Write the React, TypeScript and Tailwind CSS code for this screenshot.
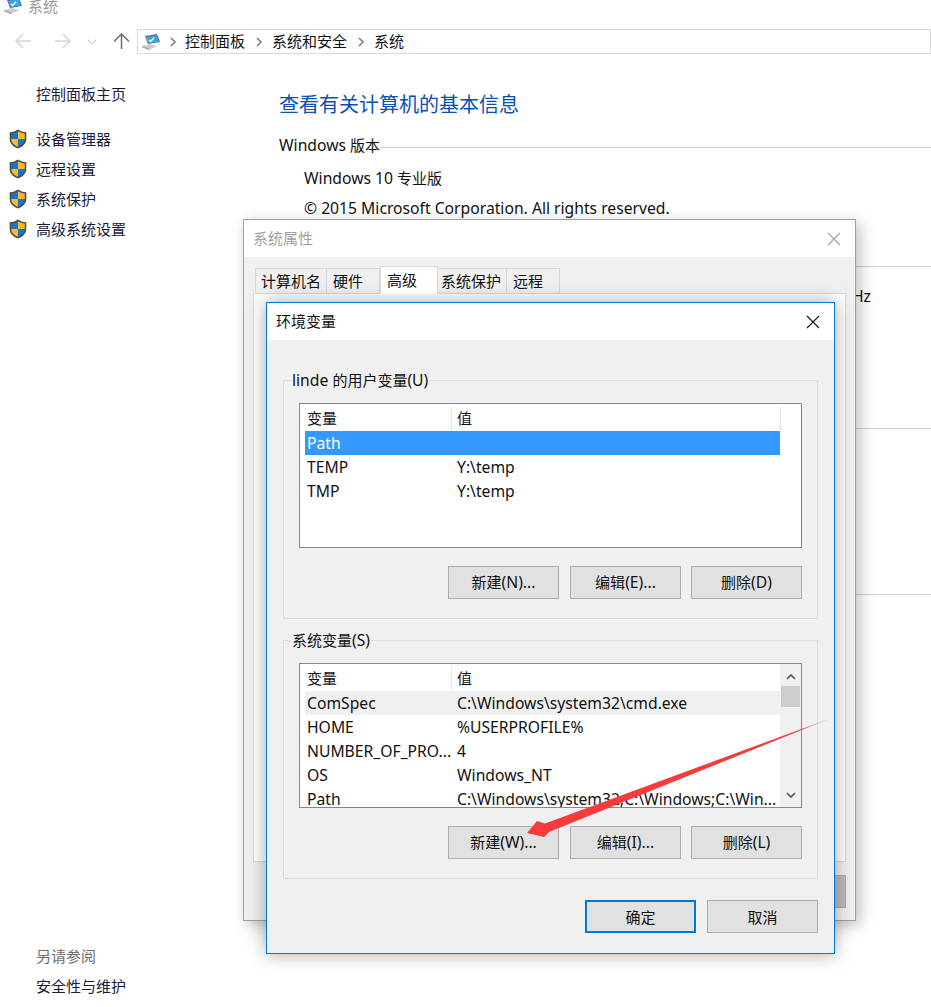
const font = "font-['Noto_Sans','Noto_Sans_CJK_SC',sans-serif]";

// latin runs are a bit wider than cjk in the original font
function Mixed({ text }: { text: string }) {
  const parts = text.match(/[\u4e00-\u9fff]+|[^\u4e00-\u9fff]+/g) ?? [];
  return (
    <>
      {parts.map((p, i) => (
        <span key={i} className={/[\u4e00-\u9fff]/.test(p) ? "text-[15px]" : "text-[15.7px]"}>
          {p}
        </span>
      ))}
    </>
  );
}

function PcIcon({ className }: { className?: string }) {
  return (
    <svg viewBox="0 0 20 16" className={className}>
      <polygon points="4,2 16,0 19,8 7,10" fill="#5a6d7c" />
      <polygon points="5,3 15.5,1.5 17.8,7.5 7.5,9" fill="#3ea6e8" />
      <path d="M8 6l1.5 1.5L13 4" stroke="#fff" strokeWidth="1.3" fill="none" />
      <polygon points="1,12 9,10 16,12 8,16" fill="#c9cdd1" />
      <polygon points="1,12 8,14.5 8,16 1,13.2" fill="#9aa1a7" />
    </svg>
  );
}

function Shield() {
  return (
    <svg viewBox="0 0 18 20" className="w-[18px] h-[20px] shrink-0">
      <path d="M9 0.5C6.5 2.2 4 3 0.7 3.2V10c0 4.5 3.5 7.7 8.3 9.5 4.8-1.8 8.3-5 8.3-9.5V3.2C14 3 11.5 2.2 9 0.5z" fill="#4d4a44" />
      <path d="M9 2.2C7 3.5 4.8 4.2 2.2 4.5V10h6.8z" fill="#1a74c9" />
      <path d="M9 2.2c2 1.3 4.2 2 6.8 2.3V10H9z" fill="#fbb92d" />
      <path d="M2.2 10c0 3.6 2.8 6.2 6.8 7.8V10z" fill="#fbb92d" />
      <path d="M15.8 10c0 3.6-2.8 6.2-6.8 7.8V10z" fill="#1a74c9" />
    </svg>
  );
}

function Crumb() {
  return (
    <svg viewBox="0 0 8 12" className="w-[8px] h-[12px] shrink-0">
      <path d="M2 2l4 4-4 4" stroke="#7a7a7a" strokeWidth="1.5" fill="none" />
    </svg>
  );
}

function NavArrow({ dir, color }: { dir: "left" | "right" | "up"; color: string }) {
  const d =
    dir === "left"
      ? "M1 8h15M8 1L1 8l7 7"
      : dir === "right"
      ? "M1 8h15M9 1l7 7-7 7"
      : "M8.5 16V1M1 8.5l7.5-7.5 7.5 7.5";
  return (
    <svg viewBox="0 0 17 17" className="w-[17px] h-[17px]">
      <path d={d} stroke={color} strokeWidth="1.5" fill="none" />
    </svg>
  );
}

function CloseX({ color }: { color: string }) {
  return (
    <svg viewBox="0 0 14 14" className="w-[14px] h-[14px]">
      <path d="M1 1l12 12M13 1L1 13" stroke={color} strokeWidth="1.1" fill="none" />
    </svg>
  );
}

function Btn({ label, primary }: { label: string; primary?: boolean }) {
  return (
    <div
      className={
        "w-[111px] h-[33px] flex items-center justify-center bg-[#e1e1e1] text-[#111] " +
        (primary ? "border-2 border-[#0078d7]" : "border border-[#adadad]")
      }
    >
      <span>
        <Mixed text={label} />
      </span>
    </div>
  );
}

function Row({ name, value, selected, hover }: { name: string; value: string; selected?: boolean; hover?: boolean }) {
  return (
    <div
      className={
        "flex items-center h-[24px] w-[475px] ml-[5px] pl-[2px] pt-[2px] shrink-0 text-[15.7px] whitespace-nowrap " +
        (selected ? "bg-[#3399ff] text-white" : hover ? "bg-[#f0f0f0] text-[#111]" : "text-[#111]")
      }
    >
      <span className="w-[150px] overflow-hidden">{name}</span>
      <span>{value}</span>
    </div>
  );
}

function VarList({ children, scroll }: { children: React.ReactNode; scroll?: boolean }) {
  return (
    <div className="relative h-[145px] bg-white border border-[#828790] overflow-hidden">
      <div className="flex items-stretch h-[27px] ml-[5px] w-[476px] pt-[2px] text-[15px] text-[#111]">
        <span className="w-[147px] pl-[2px] flex items-center border-r border-[#e5e5e5]">变量</span>
        <span className="flex-1 pl-[5px] flex items-center border-r border-[#e5e5e5]">值</span>
      </div>
      {children}
      {scroll && (
        <div className="absolute right-0 top-0 bottom-0 w-[21px] flex flex-col items-center bg-[#f0f0f0]">
          <svg viewBox="0 0 10 6" className="w-[10px] h-[6px] mt-[10px]">
            <path d="M1 5l4-4 4 4" stroke="#505050" strokeWidth="1.6" fill="none" />
          </svg>
          <div className="w-[19px] h-[21px] mt-[6px] bg-[#cdcdcd]" />
          <svg viewBox="0 0 10 6" className="w-[10px] h-[6px] mt-[85px]">
            <path d="M1 1l4 4 4-4" stroke="#505050" strokeWidth="1.6" fill="none" />
          </svg>
        </div>
      )}
    </div>
  );
}

function Group({ legend, buttons, children }: { legend: string; buttons: string[]; children: React.ReactNode }) {
  return (
    <div className="relative h-[239px] border border-[#dcdcdc] pt-[22px] px-[15px]">
      <span className="absolute left-[7px] top-[-10px] bg-[#f0f0f0] px-[1px] leading-[18px] text-[#111] whitespace-nowrap">
        <Mixed text={legend} />
      </span>
      {children}
      <div className="flex justify-end gap-[10px] mt-[18px]">
        {buttons.map((b) => (
          <div key={b} className="first:mr-px">
            <Btn label={b} />
          </div>
        ))}
      </div>
    </div>
  );
}

const tabs = [
  { name: "计算机名", cls: "w-[72px] pl-[5px]" },
  { name: "硬件", cls: "w-[53px] pl-[6px]" },
  { name: "高级", cls: "w-[58px] pl-[6px]" },
  { name: "系统保护", cls: "w-[69px] pl-[3px]" },
  { name: "远程", cls: "w-[53px] pl-[6px]" },
];

export default function App() {
  return (
    <div className={"relative w-[931px] h-[1007px] overflow-hidden bg-white " + font}>
      {/* control panel window */}
      <div className="flex items-center gap-[5px] h-[12px] pl-[3px] text-[15px] text-[#9a9a9a]">
        <PcIcon className="w-[20px] h-[16px]" />
        <span>系统</span>
      </div>

      <div className="flex items-center h-[25px] mt-[17px]">
        <div className="flex items-center w-[137px] pl-[15px]">
          <NavArrow dir="left" color="#d4d4d4" />
          <div className="ml-[22px]">
            <NavArrow dir="right" color="#d4d4d4" />
          </div>
          <svg viewBox="0 0 10 6" className="w-[10px] h-[6px] ml-[16px]">
            <path d="M1 1l4 4 4-4" stroke="#d4d4d4" strokeWidth="1.4" fill="none" />
          </svg>
          <div className="ml-[16px]">
            <NavArrow dir="up" color="#6d6d6d" />
          </div>
        </div>
        <div className="flex-1 h-[25px] border border-[#d9d9d9] flex items-center pl-[3px] text-[15px] text-[#111]">
          <PcIcon className="w-[20px] h-[16px]" />
          <div className="ml-[8px]"><Crumb /></div>
          <span className="ml-[8px]">控制面板</span>
          <div className="ml-[10px]"><Crumb /></div>
          <span className="ml-[9px]">系统和安全</span>
          <div className="ml-[10px]"><Crumb /></div>
          <span className="ml-[9px]">系统</span>
        </div>
      </div>

      <div className="flex h-[953px]">
        <div className="w-[279px] shrink-0 flex flex-col text-[15px] text-[#111] h-full">
          <div className="pl-[36px] mt-[30px] leading-[20px] text-[#1a1a3a]">控制面板主页</div>
          <div className="flex flex-col gap-[10px] mt-[25px] pl-[9px] text-[#1a1a3a]">
            {["设备管理器", "远程设置", "系统保护", "高级系统设置"].map((t) => (
              <div key={t} className="flex items-center gap-[9px] h-[20px]">
                <Shield />
                <span>{t}</span>
              </div>
            ))}
          </div>
          <div className="mt-auto pl-[36px] pb-[11px] flex flex-col gap-[10px] leading-[20px]">
            <span className="text-[#6d6d6d]">另请参阅</span>
            <span className="text-[#1a1a3a]">安全性与维护</span>
          </div>
        </div>
        <div className="flex-1 min-w-0 text-[#111]">
          <div className="mt-[37px] text-[20px] leading-[28px] text-[#0a50b4]">查看有关计算机的基本信息</div>
          <div className="flex items-center gap-[1px] mt-[16px] h-[20px]">
            <span className="whitespace-nowrap">
              <Mixed text="Windows 版本" />
            </span>
            <div className="flex-1 h-px bg-[#cfcfcf] mt-[5px]" />
          </div>
          <div className="pl-[25px] mt-[13px] leading-[20px]">
            <Mixed text="Windows 10 专业版" />
          </div>
          <div className="pl-[25px] mt-[10px] leading-[20px] text-[15.7px] whitespace-nowrap">
            © 2015 Microsoft Corporation. All rights reserved.
          </div>
          <div className="mt-[48px] h-px bg-[#cfcfcf]" />
          <div className="pl-[573px] mt-[19px] leading-[20px] text-[15.7px]">Hz</div>
          <div className="mt-[122px] h-px bg-[#cfcfcf]" />
          <div className="mt-[165px] h-px bg-[#cfcfcf]" />
        </div>
      </div>

      {/* 系统属性 */}
      <div className="absolute left-[243px] top-[219px] w-[613px] h-[702px] bg-[#f0f0f0] border border-[#a0a0a0] shadow-[4px_4px_14px_rgba(0,0,0,0.25)] flex flex-col">
        <div className="h-[37px] bg-white flex items-center justify-between pl-[9px] pr-[14px] text-[15px] text-[#a0a0a0] shrink-0">
          <span>系统属性</span>
          <CloseX color="#a0a0a0" />
        </div>
        <div className="flex items-end h-[37px] pl-[11px] shrink-0">
          {tabs.map((t) => (
            <div
              key={t.name}
              className={
                t.cls +
                " flex items-center text-[15px] text-[#111] border border-[#d9d9d9] " +
                (t.name === "高级"
                  ? "h-[28px] bg-white border-b-0 relative z-10"
                  : "h-[26px] bg-[#f0f0f0] border-l-0 first:border-l")
              }
            >
              {t.name}
            </div>
          ))}
        </div>
        <div className="mx-[9px] h-[569px] -mt-px bg-white border border-[#d9d9d9] shrink-0" />
        <div className="flex justify-end pr-[9px] mt-[13px]">
          <div className="w-[111px] h-[33px] bg-[#bcbcbc] border border-[#adadad]" />
        </div>
      </div>

      {/* 环境变量 */}
      <div className="absolute left-[266px] top-[302px] w-[569px] h-[652px] bg-[#f0f0f0] border border-[#0078d7] shadow-[0_0_18px_rgba(0,0,0,0.35)] flex flex-col">
        <div className="h-[37px] bg-white flex items-center justify-between pl-[9px] pr-[14px] text-[15px] text-[#111] shrink-0">
          <span>环境变量</span>
          <CloseX color="#111" />
        </div>
        <div className="flex flex-col gap-[21px] mx-[16px] mt-[40px]">
          <Group legend="linde 的用户变量(U)" buttons={["新建(N)...", "编辑(E)...", "删除(D)"]}>
            <VarList>
              <Row name="Path" value="" selected />
              <Row name="TEMP" value="Y:\temp" />
              <Row name="TMP" value="Y:\temp" />
            </VarList>
          </Group>
          <Group legend="系统变量(S)" buttons={["新建(W)...", "编辑(I)...", "删除(L)"]}>
            <VarList scroll>
              <Row name="ComSpec" value="C:\Windows\system32\cmd.exe" hover />
              <Row name="HOME" value="%USERPROFILE%" />
              <Row name="NUMBER_OF_PRO..." value="4" />
              <Row name="OS" value="Windows_NT" />
              <Row name="Path" value="C:\Windows\system32;C:\Windows;C:\Win..." />
            </VarList>
          </Group>
        </div>
        <div className="flex justify-end gap-[11px] mt-[21px] pr-[16px]">
          <Btn label="确定" primary />
          <Btn label="取消" />
        </div>
      </div>

      {/* annotation arrow */}
      <svg viewBox="0 0 931 1007" className="absolute inset-0 w-[931px] h-[1007px] pointer-events-none">
        <defs>
          <linearGradient id="tail" gradientUnits="userSpaceOnUse" x1="527" y1="833" x2="834" y2="717">
            <stop offset="0" stopColor="#f53b3b" />
            <stop offset="0.88" stopColor="#f53b3b" />
            <stop offset="1" stopColor="#f53b3b" stopOpacity="0.1" />
          </linearGradient>
        </defs>
        <polygon points="527,833 537,821 545,823.5 834,717 549,832 544,837" fill="url(#tail)" />
      </svg>
    </div>
  );
}
